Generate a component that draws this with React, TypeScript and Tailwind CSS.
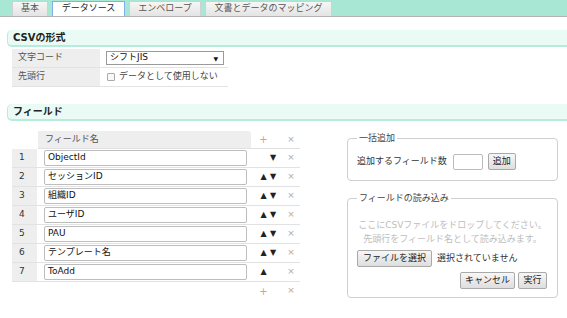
import React from 'react';

const fields = ['ObjectId', 'セッションID', '組織ID', 'ユーザID', 'PAU', 'テンプレート名', 'ToAdd'];

const tabs = [
  { label: '基本', w: 'w-[36px]' },
  { label: 'データソース', w: 'w-[73px]', active: true },
  { label: 'エンベロープ', w: 'w-[72px]' },
  { label: '文書とデータのマッピング', w: 'w-[127px]' },
];

function Btn({ children, className = '' }: { children: React.ReactNode; className?: string }) {
  return (
    <div
      className={
        'h-[17px] px-[1px] whitespace-nowrap flex items-center justify-center border border-[#a9a9a9] rounded-[2px] bg-gradient-to-b from-[#f7f7f7] to-[#dedede] text-[#222] ' +
        className
      }
    >
      {children}
    </div>
  );
}

function SectionHeader({ title }: { title: string }) {
  return (
    <div className="ml-[7px] h-[17px] bg-[#eafaf5] border-l border-b-2 border-[#b8ecda] rounded-l-[5px] pl-[5px] flex items-center font-bold text-[10px] text-[#222]">
      {title}
    </div>
  );
}

export default function App() {
  return (
    <div className="w-[567px] h-[318px] overflow-hidden bg-white text-[9px] text-[#333] font-['DejaVu_Sans','Noto_Sans_CJK_JP',sans-serif]">
      {/* tabs */}
      <div className="h-[17px] bg-[#a9e7d5] border-b border-[#b4b4b4] flex items-end pl-[12px] gap-[4px]">
        {tabs.map((t) => (
          <div
            key={t.label}
            className={
              'h-[15px] flex items-center justify-center border border-b-0 ' +
              t.w +
              (t.active
                ? ' bg-white border-[#7fb0ea] text-[#222]'
                : ' bg-gradient-to-b from-[#f6f6f6] to-[#e4e4e4] border-[#d0d0d0] text-[#555]')
            }
          >
            {t.label}
          </div>
        ))}
      </div>

      <div className="mt-[13px]">
        <SectionHeader title="CSVの形式" />
      </div>

      <div className="ml-[12px] mt-[2px] w-[216px]">
        <div className="flex h-[19px] border-b border-[#e3e3e3]">
          <div className="w-[88px] bg-[#eeeeee] pl-[6px] flex items-center text-[#555]">文字コード</div>
          <div className="flex-1 pl-[6px] flex items-center">
            <div className="w-[118px] h-[14px] border border-[#9a9a9a] px-[3px] flex items-center justify-between text-[#111]">
              <span>シフトJIS</span>
              <span className="text-[6px] pr-[2px]">▼</span>
            </div>
          </div>
        </div>
        <div className="flex h-[19px] border-b border-[#e3e3e3]">
          <div className="w-[88px] bg-[#eeeeee] pl-[6px] flex items-center text-[#555]">先頭行</div>
          <div className="flex-1 pl-[7px] flex items-center text-[#444]">
            <div className="w-[8px] h-[8px] border border-[#aaa] rounded-[1px] bg-[#f8f8f8] mr-[4px]" />
            <span>データとして使用しない</span>
          </div>
        </div>
      </div>

      <div className="mt-[17px]">
        <SectionHeader title="フィールド" />
      </div>

      <div className="mt-[10px] flex items-start">
        {/* field table */}
        <div className="ml-[12px] w-[288px]">
          <div className="flex h-[18px] items-center">
            <div className="w-[26px] h-full" />
            <div className="w-[213px] h-full bg-[#eeeeee] rounded-tr-[3px] border-b border-[#e0e0e0] pl-[7px] flex items-center text-[#555]">
              フィールド名
            </div>
            <div className="w-[31px] h-full border-b border-[#e0e0e0] flex items-center">
              <span className="ml-[8px] w-[9px] text-center text-[#d9a07a] text-[10px]">+</span>
            </div>
            <div className="flex-1 h-full border-b border-[#e0e0e0] flex items-center justify-center text-[#aaa]">×</div>
          </div>
          {fields.map((f, i) => (
            <div key={f} className="flex h-[19px] items-center border-b border-[#e2e2e2]">
              <div className="w-[25px] h-full bg-[#eeeeee] pl-[7px] flex items-center text-[#333]">{i + 1}</div>
              <div className="w-[214px] pl-[7px] flex items-center">
                <div className="w-[203px] h-[16px] border border-[#bdbdbd] rounded-[2px] px-[3px] flex items-center text-[#111]">
                  {f}
                </div>
              </div>
              <div className="w-[31px] flex items-center text-[8px] text-[#222]">
                <span className="ml-[8px] w-[9px] text-center">{i > 0 ? '▲' : ''}</span>
                <span className="w-[10px] text-center">{i < fields.length - 1 ? '▼' : ''}</span>
              </div>
              <div className="flex-1 text-center text-[#aaa]">×</div>
            </div>
          ))}
          <div className="flex h-[18px] items-center">
            <div className="w-[25px]" />
            <div className="w-[214px]" />
            <div className="w-[31px] flex items-center">
              <span className="ml-[8px] w-[9px] text-center text-[#d9a07a] text-[10px]">+</span>
            </div>
            <div className="flex-1 text-center text-[#aaa]">×</div>
          </div>
        </div>

        {/* right panels */}
        <div className="ml-[47px] w-[211px] mt-[1px]">
          <fieldset className="border border-[#cfcfcf] rounded-[4px] px-[9px] pb-[10px]">
            <legend className="px-[2px] text-[#444] leading-[12px]">一括追加</legend>
            <div className="flex items-center mt-[9px] text-[#333]">
              <span>追加するフィールド数</span>
              <div className="ml-[6px] w-[30px] h-[16px] border border-[#bbb] rounded-[2px] bg-white" />
              <Btn className="ml-[5px] w-[28px]">追加</Btn>
            </div>
          </fieldset>

          <fieldset className="mt-[11px] border border-[#cfcfcf] rounded-[4px] px-[9px] pb-[8px]">
            <legend className="px-[2px] text-[#444] leading-[12px]">フィールドの読み込み</legend>
            <div className="mt-[14px] text-center text-[#bdbdbd] leading-[14px]">
              <div>ここにCSVファイルをドロップしてください。</div>
              <div>先頭行をフィールド名として読み込みます。</div>
            </div>
            <div className="flex items-center mt-[4px]">
              <Btn className="w-[75px]">ファイルを選択</Btn>
              <span className="ml-[5px] text-[#333]">選択されていません</span>
            </div>
            <div className="flex justify-end mt-[5px] gap-[3px] pr-[1px]">
              <Btn className="w-[55px]">キャンセル</Btn>
              <Btn className="w-[29px]">実行</Btn>
            </div>
          </fieldset>
        </div>
      </div>
    </div>
  );
}
